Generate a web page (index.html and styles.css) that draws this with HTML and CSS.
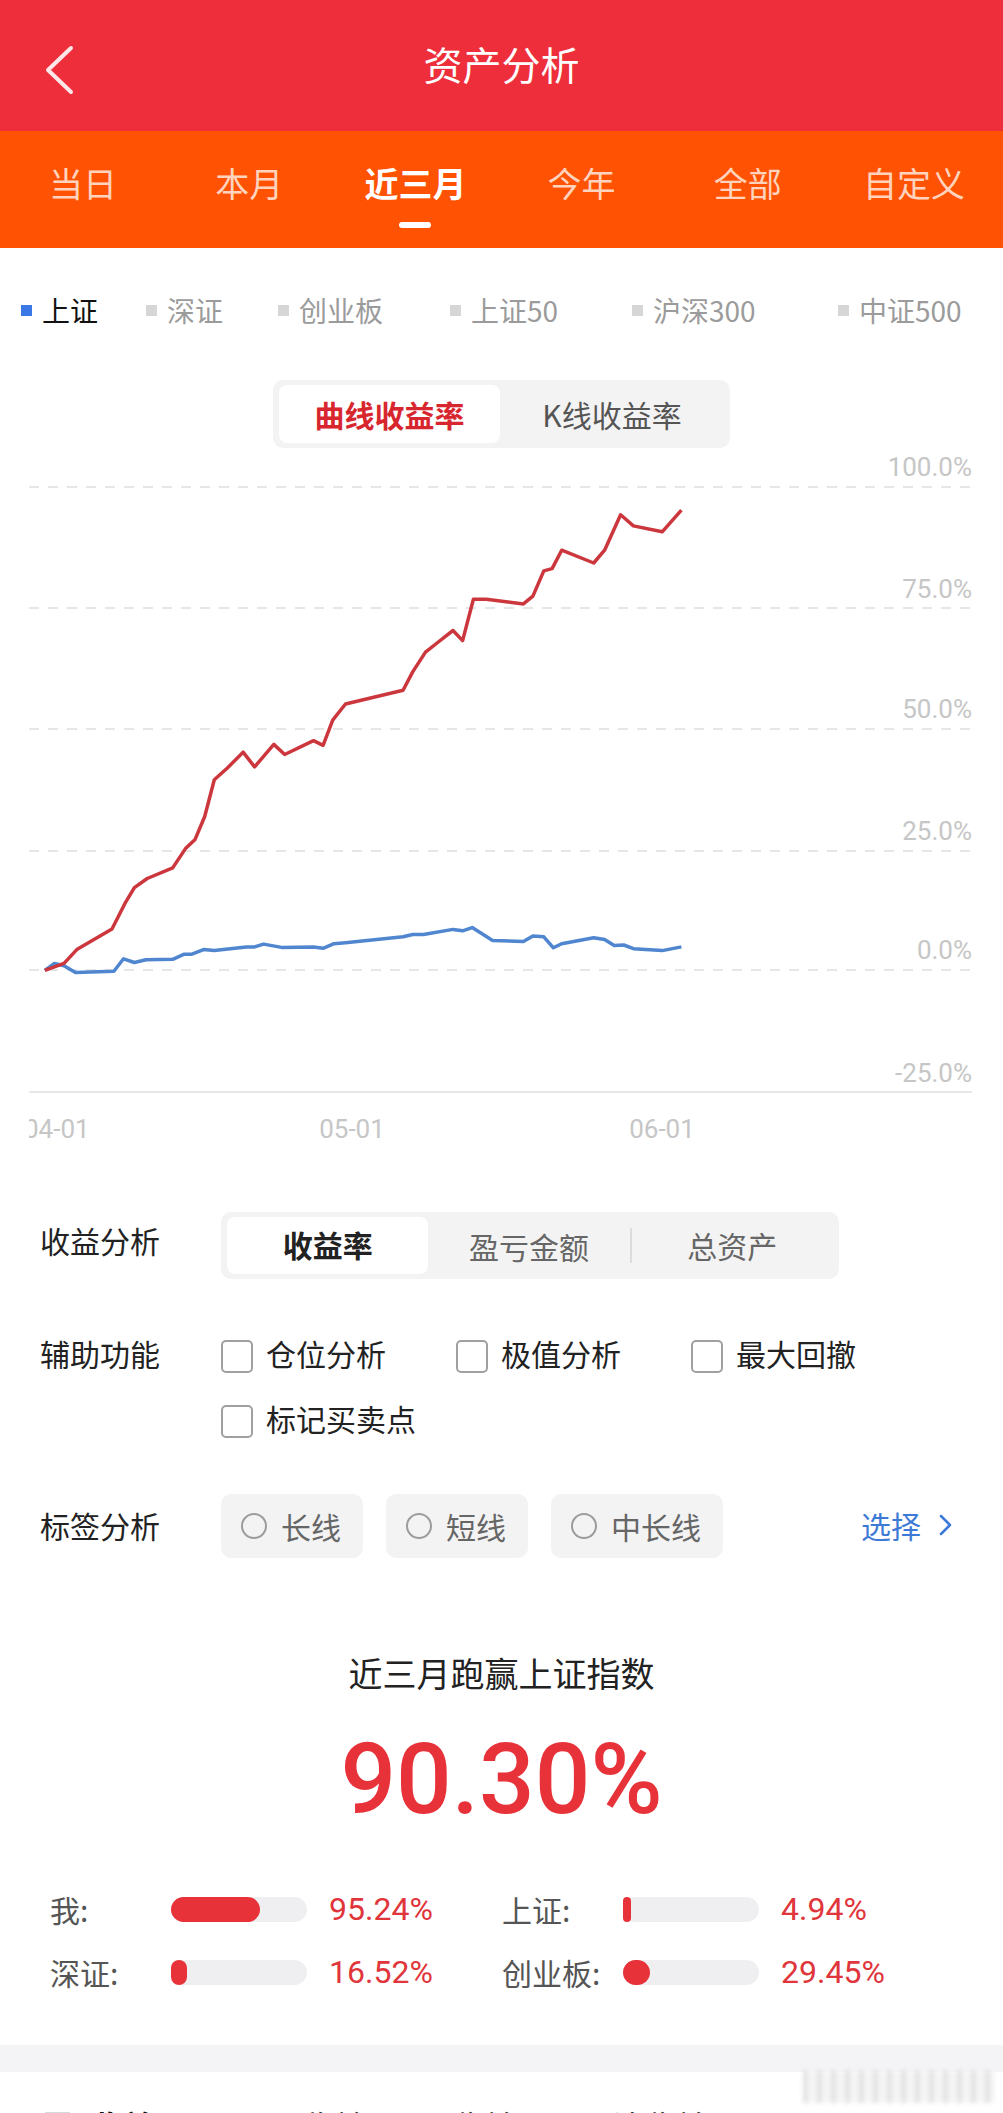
FILE: index.html
```html
<!DOCTYPE html>
<html lang="zh-CN">
<head>
  <meta charset="UTF-8">
  <title>资产分析</title>
  <link rel="stylesheet" href="styles.css">
</head>
<body>
  <!-- 顶部导航 -->
  <header class="topbar">
    <a class="back">
      <svg width="30" height="50" viewBox="0 0 30 50"><polyline points="27,3 4,25 27,47" fill="none" stroke="#fde6e8" stroke-width="4" stroke-linecap="round" stroke-linejoin="round"/></svg>
    </a>
    <h1 class="title">资产分析</h1>
    <span></span>
  </header>

  <!-- 时间区间 -->
  <nav class="periods">
    <div class="period">当日</div>
    <div class="period">本月</div>
    <div class="period active">近三月<i class="bar"></i></div>
    <div class="period">今年</div>
    <div class="period">全部</div>
    <div class="period">自定义</div>
  </nav>

  <!-- 对比指数 -->
  <ul class="indices">
    <li class="index on"><i class="dot"></i>上证</li>
    <li class="index"><i class="dot"></i>深证</li>
    <li class="index"><i class="dot"></i>创业板</li>
    <li class="index"><i class="dot"></i>上证50</li>
    <li class="index"><i class="dot"></i>沪深300</li>
    <li class="index"><i class="dot"></i>中证500</li>
  </ul>

  <div class="mode">
    <div class="mode-switch">
      <span class="on">曲线收益率</span>
      <span>K线收益率</span>
    </div>
  </div>

  <!-- 收益曲线 -->
  <svg class="chart" width="1003" height="712" viewBox="0 -12 1003 712">
    <defs>
      <clipPath id="plot"><rect x="29" y="-12" width="974" height="712"/></clipPath>
    </defs>
    <g stroke="#e6e6e6" stroke-width="2" stroke-dasharray="10 9">
      <line x1="29" y1="27" x2="972" y2="27"/>
      <line x1="29" y1="148" x2="972" y2="148"/>
      <line x1="29" y1="269" x2="972" y2="269"/>
      <line x1="29" y1="391" x2="972" y2="391"/>
      <line x1="29" y1="510" x2="972" y2="510"/>
    </g>
    <line x1="29" y1="632" x2="972" y2="632" stroke="#e8e8e8" stroke-width="2"/>
    <g class="axis" text-anchor="end">
      <text x="972" y="16">100.0%</text>
      <text x="972" y="138">75.0%</text>
      <text x="972" y="258">50.0%</text>
      <text x="972" y="380">25.0%</text>
      <text x="972" y="499">0.0%</text>
      <text x="972" y="622">-25.0%</text>
    </g>
    <g class="axis" clip-path="url(#plot)">
      <text x="24" y="678">04-01</text>
      <text x="352" y="678" text-anchor="middle">05-01</text>
      <text x="662" y="678" text-anchor="middle">06-01</text>
    </g>
    <polyline fill="none" stroke="#4f86cf" stroke-width="3.5" stroke-linejoin="round" points="44.8,510.3 54.4,503.4 64,505.7 75.5,512.6 113.9,511.2 123.5,498.8 134.4,502.5 145.9,499.7 172.7,499.3 184.3,494.2 191.9,494.2 203.5,489.6 214.3,490.6 246.3,486.9 254.6,486.9 263.6,484.1 281.5,487.4 313.5,486.9 323.1,488.3 334,483.7 345.5,482.7 403.1,476.8 412.7,474.5 423.5,474.5 453,469.4 462.6,470.8 472.2,467.6 492.6,480.5 523.4,481.4 532.9,475.9 543.8,476.8 553.4,487.8 561.7,483.7 593.7,477.7 604.6,479.5 614.2,485.5 623.8,485 633.4,488.7 662.2,490.6 681.4,486.9"/>
    <polyline fill="none" stroke="#cc373d" stroke-width="3.5" stroke-linejoin="round" points="44.8,510.3 64,503.4 76.8,489.6 112,469 124.8,443.7 134.4,427.7 147.2,418.5 172.7,407.9 185.5,388.6 195.1,379.4 204.7,356.5 214.3,319.8 227.1,308.3 243.1,292.2 254.6,306.9 273.8,284.4 284.7,294.5 313.5,280.7 323.1,285.3 332.7,260.1 345.5,244 403.1,230.2 412.7,211.9 425.5,192.1 438.3,182 453,170.5 462.6,180.6 473.4,139.3 486.2,139.3 523.4,143.9 532.9,136.1 543.8,110.9 552.1,108.6 561.7,90.2 593.7,103 604.6,90.2 620.6,54.8 633.4,65.9 662.2,71.8 681.4,50.2"/>
  </svg>

  <!-- 分析选项 -->
  <section class="opts">
    <div class="opt-row">
      <div class="opt-label">收益分析</div>
      <div class="seg">
        <span class="on">收益率</span>
        <span>盈亏金额</span>
        <span class="sep">总资产</span>
      </div>
    </div>

    <div class="opt-row row-checks">
      <div class="opt-label tall46">辅助功能</div>
      <div class="checks">
        <label class="check"><i class="box"></i>仓位分析</label>
        <label class="check"><i class="box"></i>极值分析</label>
        <label class="check"><i class="box"></i>最大回撤</label>
        <label class="check"><i class="box"></i>标记买卖点</label>
      </div>
    </div>

    <div class="opt-row row-tags">
      <div class="opt-label tall64">标签分析</div>
      <div class="chips">
        <span class="chip"><i class="radio"></i>长线</span>
        <span class="chip"><i class="radio"></i>短线</span>
        <span class="chip"><i class="radio"></i>中长线</span>
      </div>
      <a class="pick">选择<svg width="14" height="24" viewBox="0 0 14 24"><polyline points="2,3 11,12 2,21" fill="none" stroke="#3d7ad6" stroke-width="2.5" stroke-linecap="round" stroke-linejoin="round"/></svg></a>
    </div>
  </section>

  <!-- 跑赢指数 -->
  <section class="summary">
    <h2>近三月跑赢上证指数</h2>
    <div class="big">90.30%</div>
    <div class="compare">
      <div class="cmp">
        <span class="cmp-label">我:</span>
        <span class="track"><i class="fill" style="width: 89px"></i></span>
        <span class="cmp-val">95.24%</span>
      </div>
      <div class="cmp">
        <span class="cmp-label">上证:</span>
        <span class="track"><i class="fill" style="width: 8px"></i></span>
        <span class="cmp-val">4.94%</span>
      </div>
      <div class="cmp">
        <span class="cmp-label">深证:</span>
        <span class="track"><i class="fill" style="width: 16px"></i></span>
        <span class="cmp-val">16.52%</span>
      </div>
      <div class="cmp">
        <span class="cmp-label">创业板:</span>
        <span class="track"><i class="fill" style="width: 27px"></i></span>
        <span class="cmp-val">29.45%</span>
      </div>
    </div>
  </section>

  <div class="gap"></div>

  <div class="next">
    <span><i class="mark"></i></span>
    <span class="cur">收益</span>
    <span>日收益</span>
    <span>月收益</span>
    <span>累计收益</span>
  </div>

  <div class="watermark"></div>
</body>
</html>
```

FILE: styles.css
```css
body {
  margin: 0;
  width: 1003px;
  font-family: "Noto Sans CJK SC", sans-serif;
  background: #fff;
  position: relative;
  overflow: hidden;
}

/* 顶部导航 */
.topbar {
  height: 131px;
  background: #ee2e3a;
  display: grid;
  grid-template-columns: 1fr auto 1fr;
  align-items: center;
}

.back {
  display: flex;
  padding-left: 44px;
  margin-top: 9px;
}

.title {
  margin: -4px 0 0;
  font-size: 39px;
  font-weight: 400;
  line-height: 1;
  color: #fff;
}

/* 时间区间 */
.periods {
  display: flex;
  height: 117px;
  padding-right: 6px;
  background: #ff5203;
}

.period {
  flex: 1;
  display: flex;
  flex-direction: column;
  align-items: center;
  padding-top: 35px;
  font-size: 34px;
  line-height: 34px;
  color: #ffd3bd;
}

.period.active {
  color: #fff;
  font-weight: 700;
}

.period .bar {
  width: 32px;
  height: 6px;
  margin-top: 22px;
  border-radius: 3px;
  background: #fff;
}

/* 对比指数 */
.indices {
  list-style: none;
  margin: 0;
  padding: 0 0 0 21px;
  height: 124px;
  display: grid;
  grid-template-columns: 125px 132px 172px 182px 206px auto;
  align-items: center;
}

.index {
  display: flex;
  align-items: center;
  font-size: 28px;
  color: #9b9b9b;
}

.index .dot {
  width: 11px;
  height: 11px;
  margin-right: 10px;
  background: #d6d6d6;
}

.index.on {
  color: #111;
}

.index.on .dot {
  background: #3a78e6;
}

.mode {
  display: flex;
  justify-content: center;
  padding-top: 8px;
}

.mode-switch {
  display: flex;
  width: 457px;
  height: 68px;
  box-sizing: border-box;
  padding: 5px 6px;
  background: #f3f3f3;
  border-radius: 10px;
}

.mode-switch span {
  flex: 1;
  display: flex;
  align-items: center;
  justify-content: center;
  font-size: 30px;
  color: #555;
}

.mode-switch .on {
  flex: 0 0 221px;
  background: #fff;
  border-radius: 8px;
  color: #d8262f;
  font-weight: 700;
}

/* 收益曲线 */
.chart {
  display: block;
}

.axis {
  font-family: Roboto, sans-serif;
  font-size: 26px;
  fill: #c6c6c6;
}

/* 分析选项 */
.opts {
  padding: 52px 50px 0 40px;
}

.opt-row {
  display: flex;
  align-items: flex-start;
}

.opt-label {
  width: 181px;
  flex: none;
  font-size: 30px;
  line-height: 56px;
  color: #222;
}

.opt-label.tall46 {
  line-height: 46px;
}

.opt-label.tall64 {
  line-height: 62px;
}

.seg {
  display: flex;
  align-items: center;
  width: 618px;
  height: 67px;
  box-sizing: border-box;
  padding: 5px 6px;
  background: #f3f3f3;
  border-radius: 10px;
}

.seg span {
  flex: 1;
  text-align: center;
  font-size: 30px;
  color: #666;
}

.seg .on {
  align-self: stretch;
  line-height: 55px;
  background: #fff;
  border-radius: 8px;
  color: #222;
  font-weight: 700;
}

.seg .sep {
  line-height: 35px;
  border-left: 2px solid #dcdcdc;
}

.row-checks {
  margin-top: 51px;
}

.checks {
  display: grid;
  grid-template-columns: repeat(3, 235px);
  row-gap: 19px;
}

.check {
  display: flex;
  align-items: center;
  height: 46px;
  font-size: 30px;
  color: #222;
}

.check .box {
  flex: none;
  width: 32px;
  height: 33px;
  box-sizing: border-box;
  margin: 6px 13px 0 0;
  border: 2px solid #a0a0a0;
  border-radius: 5px;
}

.row-tags {
  margin-top: 53px;
}

.chips {
  display: flex;
  gap: 23px;
}

.chip {
  display: flex;
  align-items: center;
  height: 64px;
  padding: 0 22px 0 20px;
  background: #f3f3f3;
  border-radius: 10px;
  font-size: 30px;
  color: #666;
}

.chip .radio {
  width: 26px;
  height: 26px;
  box-sizing: border-box;
  margin-right: 14px;
  border: 2px solid #9c9c9c;
  border-radius: 50%;
}

.pick {
  margin-left: auto;
  display: flex;
  align-items: center;
  gap: 18px;
  height: 62px;
  font-size: 30px;
  color: #3d7ad6;
}

/* 跑赢指数 */
.summary {
  text-align: center;
  padding-top: 92px;
}

.summary h2 {
  margin: 0;
  font-size: 34px;
  font-weight: 400;
  line-height: 46px;
  color: #222;
}

.big {
  margin-top: 29px;
  font-family: Roboto, sans-serif;
  font-size: 98px;
  font-weight: 500;
  line-height: 110px;
  color: #e8323a;
}

.compare {
  display: grid;
  grid-template-columns: 452px auto;
  row-gap: 23px;
  padding: 54px 0 0 50px;
  text-align: left;
}

.cmp {
  display: flex;
  align-items: center;
  height: 40px;
}

.cmp-label {
  width: 121px;
  font-size: 30px;
  color: #555;
}

.track {
  flex: none;
  width: 136px;
  height: 25px;
  border-radius: 13px;
  background: #efeff1;
}

.track .fill {
  display: block;
  height: 100%;
  border-radius: 13px;
  background: #e8323a;
}

.cmp-val {
  margin-left: 22px;
  font-family: Roboto, sans-serif;
  font-size: 32px;
  color: #e0353b;
}

.gap {
  height: 27px;
  margin-top: 53px;
  background: #f4f4f6;
}

.next {
  display: grid;
  grid-template-columns: 45px 179px 150px 160px auto;
  padding: 37px 0 0 45px;
  font-size: 32px;
  line-height: 32px;
  color: #333;
}

.next .mark {
  display: block;
  width: 25px;
  height: 22px;
  margin-top: 3px;
  background: #d8d8d8;
}

.next .cur {
  font-weight: 700;
  color: #111;
}

.watermark {
  position: absolute;
  left: 803px;
  top: 2070px;
  width: 192px;
  height: 33px;
  background: repeating-linear-gradient(90deg, #dcdcdc 0 5px, #f3f3f3 5px 14px);
  filter: blur(2px);
  opacity: 0.8;
}
```
